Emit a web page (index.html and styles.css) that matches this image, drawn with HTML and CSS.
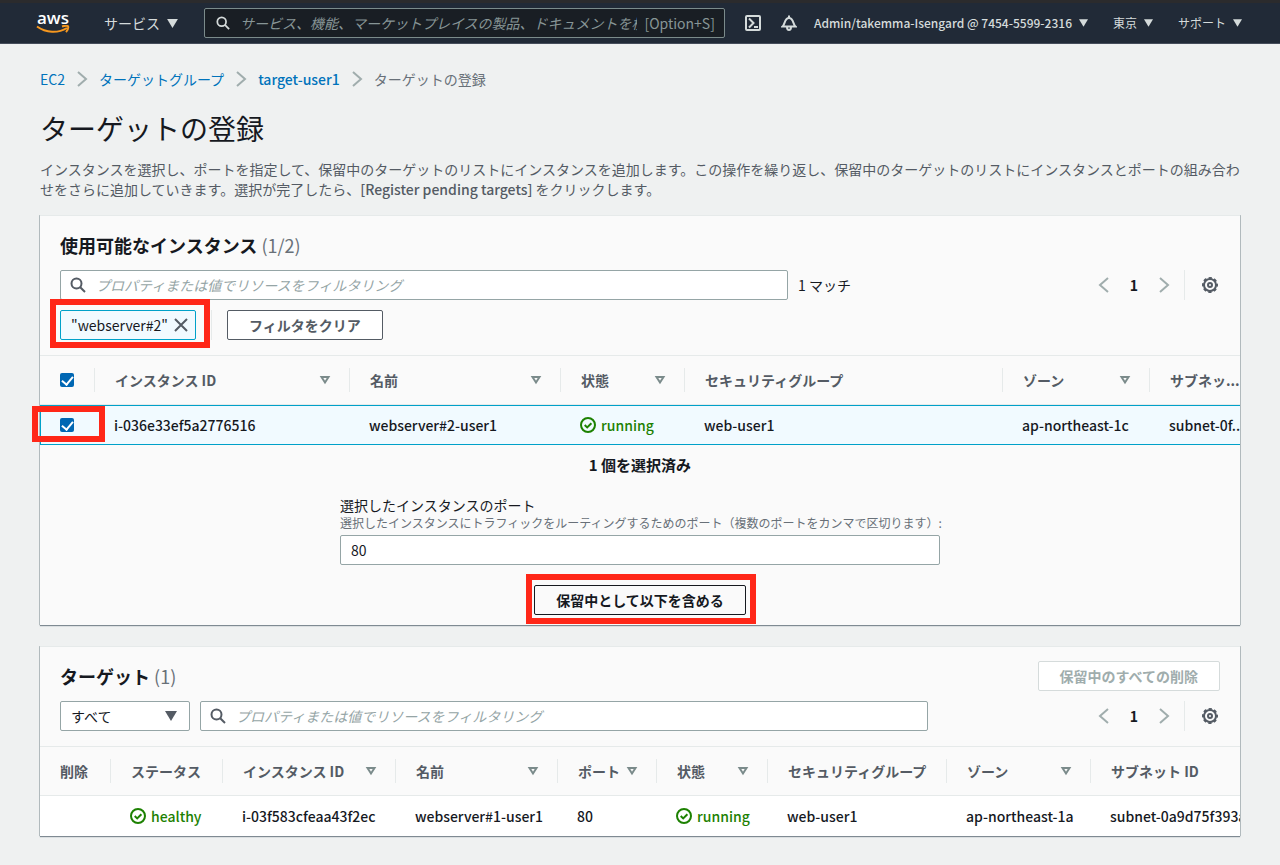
FILE: index.html
```html
<!DOCTYPE html>
<html lang="ja">
<head>
  <meta charset="UTF-8">
  <meta name="viewport" content="width=device-width, initial-scale=1.0">
  <title>ターゲットの登録 | EC2</title>
  <link rel="stylesheet" href="styles.css">
</head>
<body>
  <svg class="sprite" aria-hidden="true">
    <symbol id="search" viewBox="0 0 16 16"><circle cx="6.5" cy="6.5" r="5" /><path d="M10.2 10.2L15 15" /></symbol>
    <symbol id="left" viewBox="0 0 16 16"><path d="M12 1L4 8l8 7" /></symbol>
    <symbol id="right" viewBox="0 0 16 16"><path d="M4 1l8 7-8 7" /></symbol>
    <symbol id="close" viewBox="0 0 16 16"><path d="M2 2l12 12M14 2L2 14" /></symbol>
    <symbol id="sort" viewBox="0 0 12 10"><path d="M2.500 2h7L6 7.500z" /></symbol>
    <symbol id="caret" viewBox="0 0 12 10"><path d="M0 0h12L6 10z" /></symbol>
    <symbol id="ok" viewBox="0 0 16 16"><circle cx="8" cy="8" r="7" /><path d="M4.7 8l2.5 2.4 4.2-4.2" /></symbol>
    <symbol id="gear" viewBox="0 0 16 16"><circle cx="8" cy="8" r="6" /><circle cx="8" cy="8" r="7" stroke-dasharray="3.200 2.300" stroke-dashoffset="1.600" /><circle cx="8" cy="8" r="2" /></symbol>
  </svg>

  <header class="topbar">
    <a class="logo" href="#" aria-label="aws">
      <span>aws</span>
      <svg viewBox="0 0 34 9"><path d="M1 1.500c9 6.500 21 7 30 1.500" /><path d="M26 1.500c3-1 5-1 6-.3.600 1.500-.2 4-2 6" /></svg>
    </a>
    <button class="menu services">サービス <svg class="caret"><use href="#caret" /></svg></button>
    <label class="global-search">
      <svg class="icon"><use href="#search" /></svg>
      <input type="text" aria-label="検索" placeholder="サービス、機能、マーケットプレイスの製品、ドキュメントを検索します">
      <span>[Option+S]</span>
    </label>
    <button class="icon-btn" aria-label="CloudShell">
      <svg class="icon" viewBox="0 0 16 16"><rect x="1" y="1" width="14" height="14" rx="1" /><path d="M4 3.500L8.500 8 4 12.500M9 12h4" /></svg>
    </button>
    <button class="icon-btn" aria-label="通知">
      <svg class="icon" viewBox="0 0 16 16"><path d="M8 .5V3M1.500 11.500C4 9.500 3.500 3 8 3s4 6.500 6.500 8.500zM6 12c0 4 4 4 4 0" /></svg>
    </button>
    <nav class="account">
      <button class="menu user">Admin/takemma-Isengard @ 7454-5599-2316 <svg class="caret"><use href="#caret" /></svg></button>
      <button class="menu">東京 <svg class="caret"><use href="#caret" /></svg></button>
      <button class="menu">サポート <svg class="caret"><use href="#caret" /></svg></button>
    </nav>
  </header>

  <main>
    <nav class="breadcrumbs">
      <a href="#">EC2</a>
      <svg class="icon"><use href="#right" /></svg>
      <a href="#">ターゲットグループ</a>
      <svg class="icon"><use href="#right" /></svg>
      <a class="latin" href="#">target-user1</a>
      <svg class="icon"><use href="#right" /></svg>
      <span>ターゲットの登録</span>
    </nav>

    <h1>ターゲットの登録</h1>
    <p class="intro">インスタンスを選択し、ポートを指定して、保留中のターゲットのリストにインスタンスを追加します。この操作を繰り返し、保留中のターゲットのリストにインスタンスとポートの組み合わせをさらに追加していきます。選択が完了したら、<span class="latin">[Register pending targets]</span> をクリックします。</p>

    <section class="panel">
      <div class="panel-head">
        <h2>使用可能なインスタンス <span>(1/2)</span></h2>
        <div class="toolbar">
          <label class="filter">
            <svg class="icon"><use href="#search" /></svg>
            <input type="text" aria-label="インスタンスをフィルタリング" placeholder="プロパティまたは値でリソースをフィルタリング">
          </label>
          <span class="matches">1 マッチ</span>
          <div class="pager">
            <button aria-label="前へ"><svg class="icon"><use href="#left" /></svg></button>
            <b>1</b>
            <button aria-label="次へ"><svg class="icon"><use href="#right" /></svg></button>
            <button class="settings" aria-label="設定"><svg class="icon"><use href="#gear" /></svg></button>
          </div>
        </div>
        <div class="tokens">
          <div class="marked mark-token">
            <div class="token">"webserver#2" <button aria-label="削除"><svg class="icon"><use href="#close" /></svg></button></div>
          </div>
          <div class="clear"><button class="btn">フィルタをクリア</button></div>
        </div>
      </div>

      <table class="instances">
        <colgroup>
          <col class="w-check"><col class="w-id"><col class="w-name"><col class="w-state"><col><col class="w-zone"><col class="w-subnet">
        </colgroup>
        <thead>
          <tr>
            <th><input type="checkbox" aria-label="すべて選択" checked></th>
            <th><div>インスタンス ID <svg class="sort"><use href="#sort" /></svg></div></th>
            <th><div>名前 <svg class="sort"><use href="#sort" /></svg></div></th>
            <th><div>状態 <svg class="sort"><use href="#sort" /></svg></div></th>
            <th><div>セキュリティグループ</div></th>
            <th><div>ゾーン <svg class="sort"><use href="#sort" /></svg></div></th>
            <th>サブネッ...</th>
          </tr>
        </thead>
        <tbody>
          <tr class="selected">
            <td class="marked mark-check"><input type="checkbox" aria-label="i-036e33ef5a2776516" checked></td>
            <td>i-036e33ef5a2776516</td>
            <td>webserver#2-user1</td>
            <td><span class="status"><svg class="icon"><use href="#ok" /></svg>running</span></td>
            <td>web-user1</td>
            <td>ap-northeast-1c</td>
            <td>subnet-0f..</td>
          </tr>
        </tbody>
      </table>

      <div class="selection">
        <h3>1 個を選択済み</h3>
        <div class="field">
          <label for="port">選択したインスタンスのポート</label>
          <small>選択したインスタンスにトラフィックをルーティングするためのポート（複数のポートをカンマで区切ります）:</small>
          <input id="port" type="text" value="80">
        </div>
        <div class="marked mark-include">
          <button class="btn include">保留中として以下を含める</button>
        </div>
      </div>
    </section>

    <section class="panel">
      <div class="panel-head">
        <div class="title-row">
          <h2>ターゲット <span>(1)</span></h2>
          <button class="btn" disabled>保留中のすべての削除</button>
        </div>
        <div class="toolbar">
          <div class="select">
            <select aria-label="状態"><option>すべて</option></select>
            <svg class="caret"><use href="#caret" /></svg>
          </div>
          <label class="filter">
            <svg class="icon"><use href="#search" /></svg>
            <input type="text" aria-label="ターゲットをフィルタリング" placeholder="プロパティまたは値でリソースをフィルタリング">
          </label>
          <div class="pager">
            <button aria-label="前へ"><svg class="icon"><use href="#left" /></svg></button>
            <b>1</b>
            <button aria-label="次へ"><svg class="icon"><use href="#right" /></svg></button>
            <button class="settings" aria-label="設定"><svg class="icon"><use href="#gear" /></svg></button>
          </div>
        </div>
      </div>

      <table class="targets">
        <colgroup>
          <col class="t-delete"><col class="t-status"><col class="t-id"><col class="t-name"><col class="t-port"><col class="t-state"><col><col class="t-zone"><col class="t-subnet">
        </colgroup>
        <thead>
          <tr>
            <th><div>削除</div></th>
            <th><div>ステータス</div></th>
            <th><div>インスタンス ID <svg class="sort"><use href="#sort" /></svg></div></th>
            <th><div>名前 <svg class="sort"><use href="#sort" /></svg></div></th>
            <th><div>ポート <svg class="sort"><use href="#sort" /></svg></div></th>
            <th><div>状態 <svg class="sort"><use href="#sort" /></svg></div></th>
            <th><div>セキュリティグループ</div></th>
            <th><div>ゾーン <svg class="sort"><use href="#sort" /></svg></div></th>
            <th><div>サブネット ID</div></th>
          </tr>
        </thead>
        <tbody>
          <tr>
            <td></td>
            <td><span class="status"><svg class="icon"><use href="#ok" /></svg>healthy</span></td>
            <td>i-03f583cfeaa43f2ec</td>
            <td>webserver#1-user1</td>
            <td>80</td>
            <td><span class="status"><svg class="icon"><use href="#ok" /></svg>running</span></td>
            <td>web-user1</td>
            <td>ap-northeast-1a</td>
            <td>subnet-0a9d75f393a</td>
          </tr>
        </tbody>
      </table>
    </section>
  </main>
</body>
</html>
```

FILE: styles.css
```css
* {
  box-sizing: border-box;
}

body {
  margin: 0;
  background-color: #eff1f1;
  color: #16191f;
  font-family: "Noto Sans CJK JP", sans-serif;
  font-size: 14px;
  line-height: 20px;
}

button,
input,
select {
  font: inherit;
  color: inherit;
}

button {
  background: none;
  border: none;
  padding: 0;
  cursor: pointer;
}

h1, h2, h3, p {
  margin: 0;
}

.latin {
  font-weight: 500;
}

.sprite {
  display: none;
}

.icon {
  width: 16px;
  height: 16px;
  flex: none;
  display: block;
  fill: none;
  stroke: currentColor;
  stroke-width: 2;
}

.caret {
  width: 12px;
  height: 10px;
  flex: none;
  fill: currentColor;
}

.sort {
  width: 12px;
  height: 10px;
  flex: none;
  fill: none;
  stroke: #7b8b8b;
  stroke-width: 2;
}

/* top bar */
.topbar {
  height: 44px;
  padding: 0 38px 0 36px;
  display: flex;
  align-items: center;
  background-color: #212a37;
  border-top: 3px solid #2b2b2d;
  border-bottom: 1px solid #454d5b;
  color: #d5dbdb;
}

.logo {
  width: 34px;
  margin-right: 34px;
  color: #fff;
  text-align: center;
  text-decoration: none;
  font-family: "Open Sans", sans-serif;
  font-size: 17px;
  font-weight: 600;
  line-height: 12px;
}

.logo span,
.logo svg {
  display: block;
}

.logo svg {
  height: 9px;
  margin-top: 1px;
  fill: none;
  stroke: #f7981f;
  stroke-width: 2;
}

.menu {
  display: flex;
  align-items: center;
  gap: 7px;
  white-space: nowrap;
  font-size: 12px;
}

.menu .caret {
  width: 9px;
  height: 8px;
}

.services {
  font-size: 14px;
}

.services .caret {
  width: 11px;
  height: 9px;
}

.global-search {
  flex: 1;
  height: 30px;
  margin: 0 20px 0 26px;
  padding: 0 9px 0 11px;
  display: flex;
  align-items: center;
  background-color: #191e24;
  border: 1px solid #7b8b8b;
  border-radius: 2px;
  color: #879596;
}

.global-search .icon {
  width: 14px;
  height: 14px;
  color: #d5dbdb;
}

.global-search input {
  flex: 1;
  min-width: 0;
  margin: 0 7px 0 10px;
  padding: 0;
  background: none;
  border: none;
}

.icon-btn {
  margin-right: 20px;
}

.icon-btn + .account {
  margin-left: -3px;
}

.account {
  display: flex;
  gap: 25px;
}

.user {
  font-weight: 500;
}

input::placeholder {
  color: #879596;
  font-style: italic;
  opacity: 1;
}

/* page */
main {
  padding: 25px 40px 29px;
}

.breadcrumbs {
  display: flex;
  align-items: center;
  gap: 9px;
  color: #687078;
}

.breadcrumbs a {
  color: #0073bb;
  text-decoration: none;
}

.breadcrumbs .icon,
.pager .icon {
  color: #a0adad;
}

h1 {
  margin-top: 21px;
  font-size: 28px;
  font-weight: 400;
  line-height: 36px;
}

.intro {
  margin-top: 13px;
  margin-bottom: 16px;
  color: #545b64;
}

.panel {
  background-color: #fafafa;
  border-top: 1px solid #e6eaea;
  box-shadow: 0 1px 1px #7f8a92, 1px 0 0 #bcc4c6, -1px 0 0 #bcc4c6;
}

.panel + .panel {
  margin-top: 21px;
}

.panel-head {
  padding: 14px 20px 15px;
  display: flex;
  flex-direction: column;
  gap: 10px;
}

.title-row {
  display: flex;
  justify-content: space-between;
}

h2 {
  font-size: 18px;
  line-height: 30px;
}

h2 span {
  color: #687078;
  font-weight: 400;
}

.toolbar {
  display: flex;
  gap: 10px;
  align-items: center;
}

.filter {
  width: 728px;
  height: 30px;
  padding: 0 9px;
  display: flex;
  align-items: center;
  gap: 10px;
  background-color: #fff;
  border: 1px solid #95a5a6;
  border-radius: 2px;
}

.filter .icon {
  color: #545b64;
}

.filter input {
  flex: 1;
  min-width: 0;
  padding: 0;
  background: none;
  border: none;
}

.filter input::placeholder {
  color: #95a5a6;
}

.pager {
  margin-left: auto;
  height: 30px;
  display: flex;
  align-items: center;
}

.pager b {
  width: 44px;
  text-align: center;
}

.pager .settings {
  height: 30px;
  margin-left: 12px;
  padding: 0 2px 0 17px;
  border-left: 1px solid #e6eaea;
}

.pager .settings .icon {
  color: #545b64;
}

.tokens {
  display: flex;
}

.token {
  height: 30px;
  padding: 0 6px 0 10px;
  display: flex;
  align-items: center;
  gap: 5px;
  background-color: #f1faff;
  border: 1px solid #00a1c9;
  border-radius: 2px;
}

.token .icon {
  color: #545b64;
}

.clear {
  margin-left: 15px;
  padding-left: 15px;
  border-left: 1px solid #e6eaea;
}

.btn {
  height: 30px;
  padding: 0 21px;
  background-color: #fff;
  border: 1px solid #545b64;
  border-radius: 2px;
  color: #545b64;
  font-weight: 700;
}

.btn:disabled {
  border-color: #d5dbdb;
  color: #a0adad;
}

.btn.include {
  background-color: #fafafa;
  border-color: #16191f;
  color: #16191f;
}

.select {
  width: 130px;
  position: relative;
}

.select select {
  width: 100%;
  height: 30px;
  display: block;
  padding: 0 10px;
  appearance: none;
  background-color: #fff;
  border: 1px solid #95a5a6;
  border-radius: 2px;
}

.select .caret {
  position: absolute;
  top: 10px;
  right: 13px;
  color: #545b64;
  pointer-events: none;
}

/* highlight frames */
.marked {
  position: relative;
}

.marked::after {
  content: "";
  position: absolute;
  border: 6px solid #ff2718;
  pointer-events: none;
}

.mark-token::after {
  inset: -11px -14px -8px -10px;
}

.mark-check::after {
  inset: 0 -10px 2px -9px;
}

.mark-include::after {
  inset: -11px -10px -9px -8px;
}

/* tables */
table {
  width: 100%;
  table-layout: fixed;
  border-collapse: separate;
  border-spacing: 0;
  border-top: 1px solid #e6eaea;
}

th,
td {
  padding: 0;
  text-align: left;
  white-space: nowrap;
}

th {
  height: 49px;
  padding-left: 20px;
  border-bottom: 1px solid #e6eaea;
  color: #545b64;
}

th div {
  height: 24px;
  padding-right: 19px;
  display: flex;
  align-items: center;
  justify-content: space-between;
}

th:not(:last-child) {
  background: linear-gradient(#e6eaea, #e6eaea) no-repeat right center / 1px 24px;
}

td {
  height: 40px;
  padding-left: 19px;
  background-color: #fff;
  font-weight: 500;
}

td:last-child {
  overflow: hidden;
}

.selected td {
  background-color: #f1faff;
  border-top: 1px solid #00a1c9;
  border-bottom: 1px solid #00a1c9;
}

.selected td:first-child {
  border-left: 1px solid #00a1c9;
}

.w-check { width: 55px; }
.w-id { width: 255px; }
.w-name { width: 211px; }
.w-state { width: 124px; }
.w-zone { width: 147px; }
.w-subnet { width: 90px; }

.t-delete { width: 71px; }
.t-status { width: 112px; }
.t-id { width: 173px; }
.t-name { width: 162px; }
.t-port { width: 99px; }
.t-state { width: 111px; }
.t-zone { width: 144px; }
.t-subnet { width: 149px; }

input[type="checkbox"] {
  appearance: none;
  width: 14px;
  height: 14px;
  margin: 0;
  display: grid;
  place-items: center;
  background-color: #0067b3;
  border-radius: 2px;
}

input[type="checkbox"]::after {
  content: "";
  width: 5px;
  height: 9px;
  margin-bottom: 2px;
  border: solid #fff;
  border-width: 0 2px 2px 0;
  transform: rotate(40deg);
}

.status {
  display: flex;
  align-items: center;
  gap: 5px;
  color: #1d8102;
}

/* port form */
.selection {
  padding: 10px 20px;
  display: flex;
  flex-direction: column;
  align-items: center;
  gap: 20px;
}

h3 {
  font-size: 15px;
  line-height: 20px;
}

.field {
  width: 600px;
  display: flex;
  flex-direction: column;
}

.field small {
  margin-bottom: 4px;
  color: #687078;
  font-size: 12px;
  line-height: 16px;
  white-space: nowrap;
}

.field input {
  height: 30px;
  padding: 0 10px;
  background-color: #fff;
  border: 1px solid #95a5a6;
  border-radius: 2px;
}
```
